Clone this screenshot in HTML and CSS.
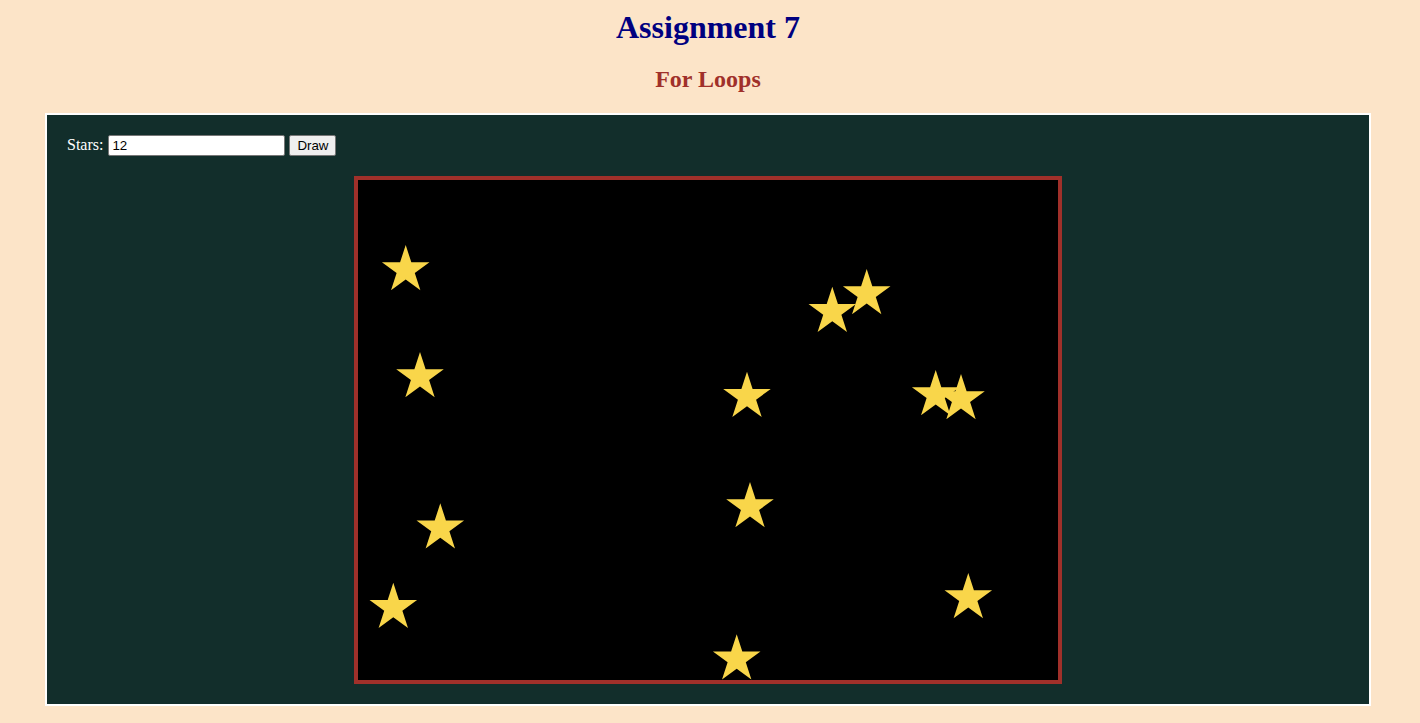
FILE: index.html
```html
<!DOCTYPE html>
<html lang="en">
<head>
<meta charset="utf-8">
<title>Assignment 7</title>
<link rel="stylesheet" href="styles.css">
</head>
<body>
<main class="page">
  <h1 class="title">Assignment 7</h1>
  <h2 class="subtitle">For Loops</h2>
  <section class="panel">
    <form class="controls">
      <label class="label" for="stars">Stars:</label>
      <input class="field" id="stars" type="text" value="12">
      <button class="btn" type="button">Draw</button>
    </form>
    <svg class="sky" width="700" height="500" viewBox="0 0 700 500" xmlns="http://www.w3.org/2000/svg">
      <defs>
        <polygon id="star" points="0,-25 5.61,-7.73 23.78,-7.73 9.08,2.95 14.69,20.23 0,9.55 -14.69,20.23 -9.08,2.95 -23.78,-7.73 -5.61,-7.73"/>
      </defs>
      <g class="stars">
        <use href="#star" x="47.7" y="90"/>
        <use href="#star" x="62" y="197"/>
        <use href="#star" x="82.3" y="348.3"/>
        <use href="#star" x="35.3" y="427.7"/>
        <use href="#star" x="389" y="216.7"/>
        <use href="#star" x="392" y="327"/>
        <use href="#star" x="378.7" y="479.3"/>
        <use href="#star" x="474.3" y="131.7"/>
        <use href="#star" x="508.7" y="114"/>
        <use href="#star" x="610.3" y="418"/>
        <use href="#star" x="577.7" y="215"/>
        <use href="#star" x="603" y="219"/>
      </g>
    </svg>
  </section>
</main>
</body>
</html>
```
FILE: styles.css
```css
html, body {
  background: #fce4c8;
}

body {
  margin: 8px;
  font-family: "Liberation Serif", "Times New Roman", serif;
}

.page {
  margin: 0 41px 0 37px;
  padding-top: 1px;
}

.title {
  margin: 0;
  text-align: center;
  font-size: 32px;
  font-weight: bold;
  color: #000080;
}

.subtitle {
  margin: 19.92px 0;
  text-align: center;
  font-size: 24px;
  font-weight: bold;
  color: #a0302a;
}

.panel {
  display: flex;
  flex-direction: column;
  gap: 20px;
  padding: 20px;
  background: #122e2b;
  border: 2px solid #ffffff;
}

.controls {
  display: flex;
  align-items: baseline;
  margin: 0;
}

.label {
  color: #ffffff;
  font-size: 16px;
  margin-right: 5px;
  font-family: "Liberation Serif", "Times New Roman", serif;
}

.field {
  width: 177px;
  height: 21px;
  box-sizing: border-box;
  margin-right: 4px;
  font-family: "Liberation Sans", Arial, sans-serif;
  font-size: 13.33px;
  padding: 1px 3px;
  border: 1px solid #767676;
  border-radius: 2px;
  background: #ffffff;
  color: #000000;
}

.btn {
  width: 47px;
  height: 21px;
  box-sizing: border-box;
  font-family: "Liberation Sans", Arial, sans-serif;
  font-size: 13.33px;
  padding: 1px 6px;
  border: 1px solid #767676;
  border-radius: 2px;
  background: #efefef;
  color: #000000;
}

.sky {
  display: block;
  align-self: center;
  width: 700px;
  height: 500px;
  background: #000000;
  border: 4px solid #a0302a;
}

.stars {
  fill: #f9d64a;
}
```
